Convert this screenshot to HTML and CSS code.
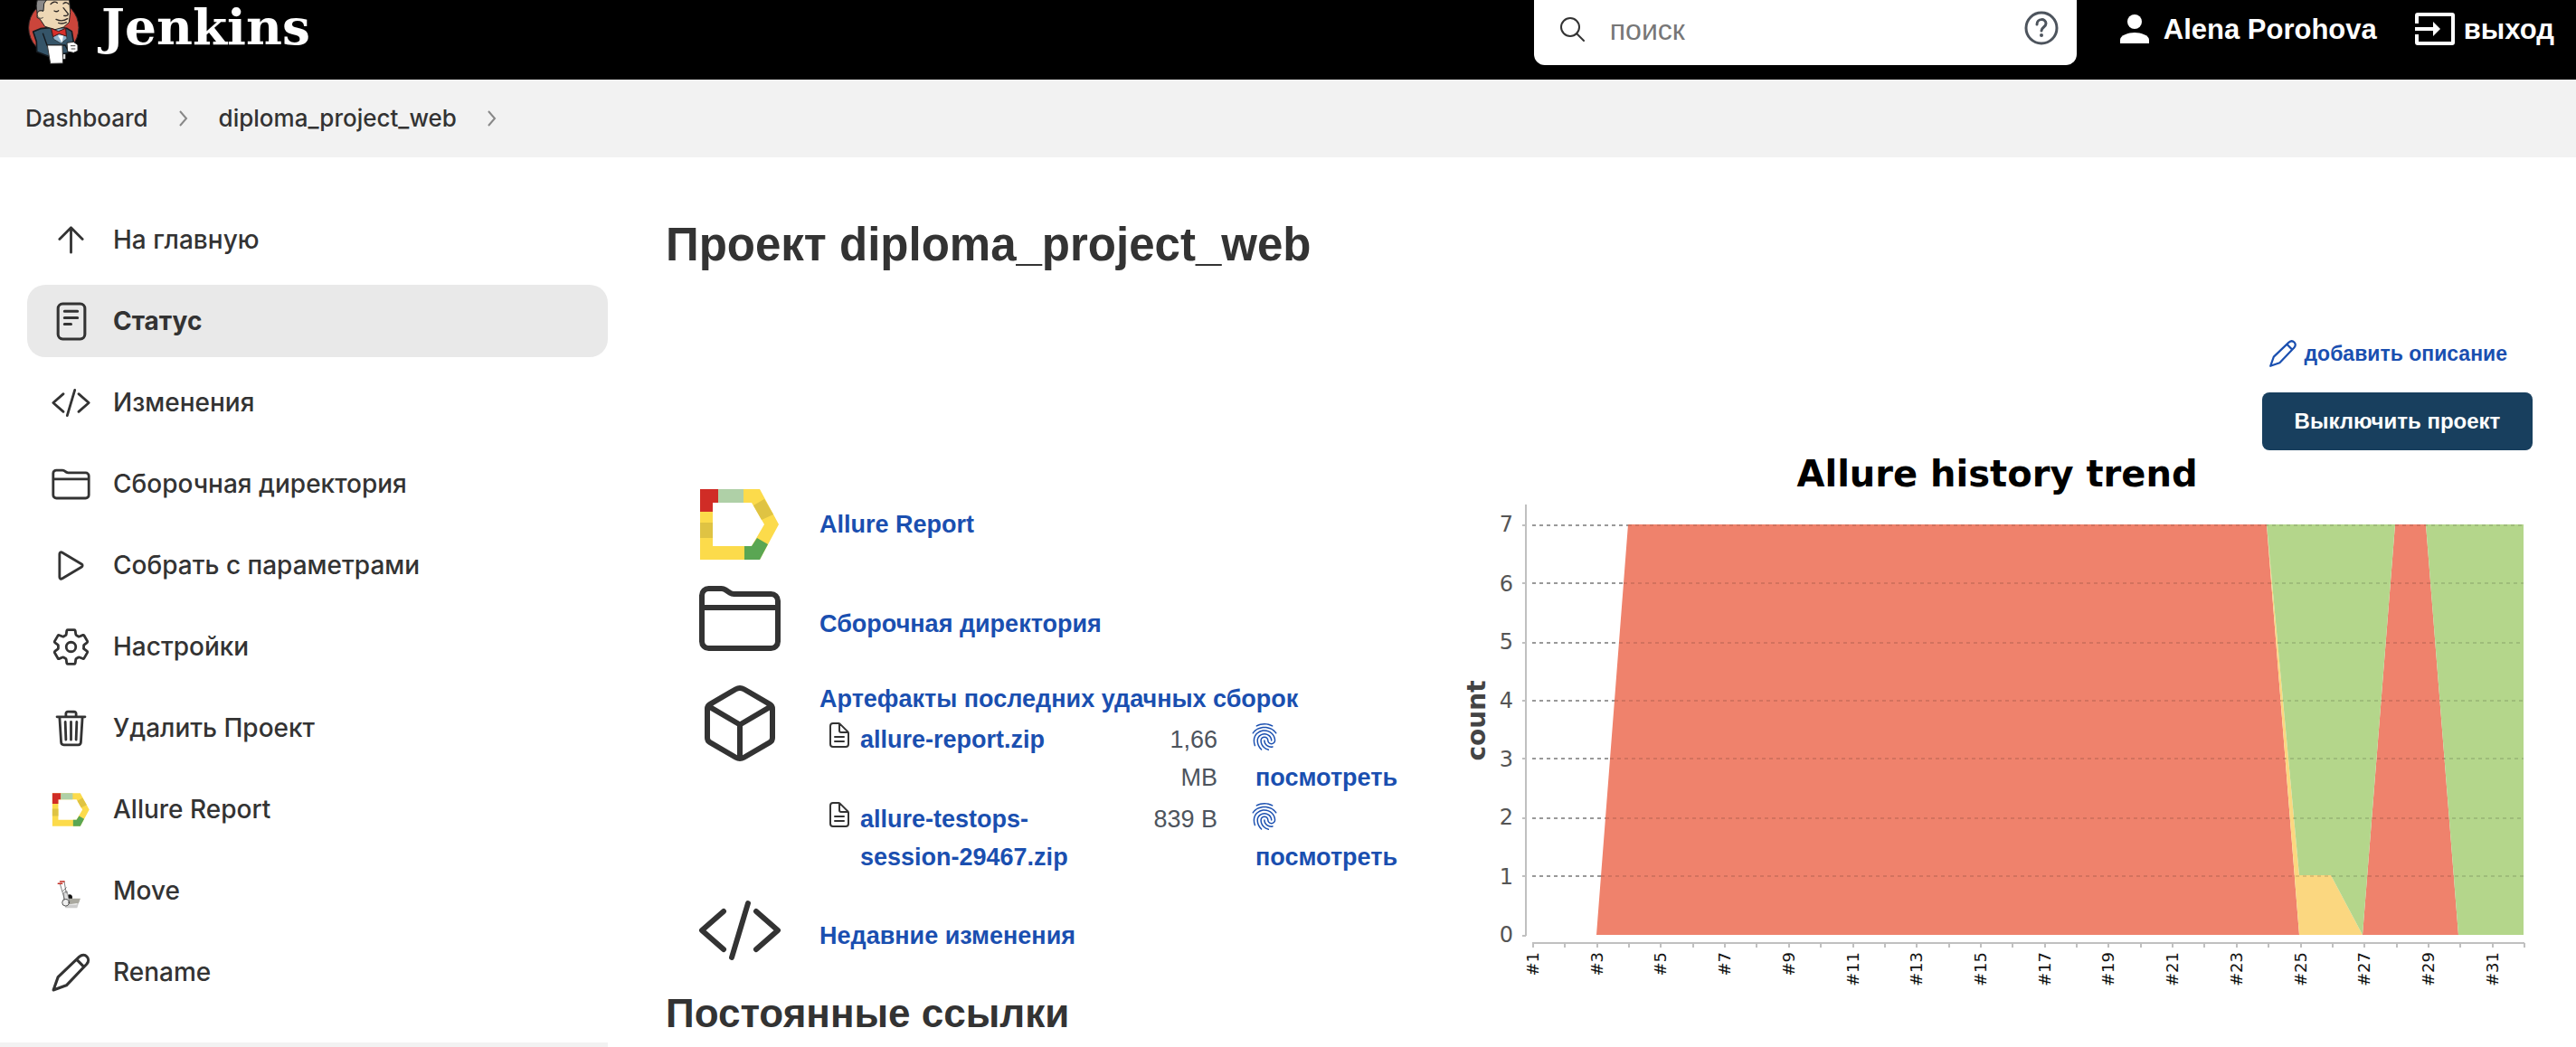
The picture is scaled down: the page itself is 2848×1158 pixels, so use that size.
FILE: index.html
```html
<!DOCTYPE html>
<html lang="ru">
<head>
<meta charset="utf-8">
<title>diploma_project_web [Jenkins]</title>
<link rel="stylesheet" href="styles.css">
</head>
<body>
<svg class="sprite" aria-hidden="true">
  <symbol id="i-chevron" viewBox="0 0 10 18"><path d="M1 1l7 8-7 8"/></symbol>
  <symbol id="i-up" viewBox="0 0 512 512"><path d="M112 244L256 100l144 144M256 120v292"/></symbol>
  <symbol id="i-status" viewBox="0 0 44 44"><rect x="8" y="3" width="29" height="38" rx="5"/><path d="M15 11h14M15 18h14M15 25h7"/></symbol>
  <symbol id="i-code" viewBox="0 0 512 512"><path d="M160 368L32 256l128-112M352 368l128-112-128-112M304 96l-96 320"/></symbol>
  <symbol id="i-folder" viewBox="0 0 512 512"><path d="M440 432H72a40 40 0 01-40-40V120a40 40 0 0140-40h75.890a40 40 0 0122.190 6.720l27.840 18.560a40 40 0 0022.190 6.720H440a40 40 0 0140 40v240a40 40 0 01-40 40zM32 192h448"/></symbol>
  <symbol id="i-play" viewBox="0 0 512 512"><path d="M112 111v290c0 17.440 17 28.520 31 20.160l247.900-148.370c12.120-7.250 12.120-26.330 0-33.580L143 90.840c-14-8.360-31 2.720-31 20.160z"/></symbol>
  <symbol id="i-gear" viewBox="0 0 512 512"><circle cx="256" cy="256" r="60"/><path d="M416.390 256a154.340 154.340 0 01-1.530 20.790l45.210 35.460a10.810 10.810 0 012.450 13.750l-42.770 74a10.810 10.810 0 01-13.140 4.590l-44.900-18.080a16.110 16.110 0 00-15.170 1.750A164.480 164.480 0 01325 400.800a15.940 15.940 0 00-8.820 12.140l-6.730 47.890a11.080 11.080 0 01-10.680 9.170h-85.540a11.110 11.110 0 01-10.690-8.870l-6.720-47.820a16.070 16.070 0 00-9-12.220 155.300 155.300 0 01-21.460-12.570 16 16 0 00-15.110-1.710l-44.890 18.070a10.810 10.810 0 01-13.140-4.580l-42.770-74a10.800 10.800 0 012.450-13.750l38.210-30a16.050 16.050 0 006-14.080c-.36-4.170-.58-8.330-.58-12.500s.21-8.270.58-12.350a16 16 0 00-6.070-13.940l-38.190-30A10.810 10.810 0 0149.480 186l42.770-74a10.810 10.810 0 0113.140-4.590l44.900 18.080a16.110 16.110 0 0015.170-1.750A164.480 164.480 0 01187 111.200a15.940 15.940 0 008.820-12.140l6.730-47.890A11.080 11.080 0 01213.230 42h85.540a11.110 11.110 0 0110.690 8.870l6.720 47.820a16.070 16.070 0 009 12.220 155.300 155.300 0 0121.460 12.570 16 16 0 0015.110 1.710l44.890-18.070a10.810 10.810 0 0113.140 4.580l42.770 74a10.800 10.800 0 01-2.450 13.750l-38.210 30a16.050 16.050 0 00-6.050 14.080c.33 4.140.55 8.300.55 12.470z"/></symbol>
  <symbol id="i-trash" viewBox="0 0 512 512"><path d="M112 112l20 320c.95 18.490 14.400 32 32 32h184c17.670 0 30.870-13.510 32-32l20-320M80 112h352M192 112V72a23.930 23.930 0 0124-24h80a23.930 23.930 0 0124 24v40M256 176v224M184 176l8 224M328 176l-8 224"/></symbol>
  <symbol id="i-pencil" viewBox="0 0 44 44"><path d="M3 41l5-14L31 5c6-5 13 2 8 8L17 36zM28 8l8 8"/></symbol>
  <symbol id="i-cube" viewBox="0 0 512 512"><path d="M448 341.370V170.610A32 32 0 00432.110 143l-152-88.460a47.940 47.940 0 00-48.240 0L79.890 143A32 32 0 0064 170.610v170.760A32 32 0 0079.890 369l152 88.460a48 48 0 0048.240 0l152-88.460A32 32 0 00448 341.370zM69 154l187 110 187-110M256 464V264"/></symbol>
  <symbol id="i-doc" viewBox="0 0 512 512"><path d="M416 221.250V416a48 48 0 01-48 48H144a48 48 0 01-48-48V96a48 48 0 0148-48h98.750a32 32 0 0122.620 9.370l141.260 141.260a32 32 0 019.370 22.620zM256 56v120a32 32 0 0032 32h120M176 288h160M176 368h160"/></symbol>
  <symbol id="i-print" viewBox="0 0 24 24"><path d="M17.810 4.470c-.08 0-.16-.02-.23-.06C15.660 3.420 14 3 12.010 3c-1.980 0-3.860.47-5.570 1.410-.24.13-.54.04-.68-.2-.13-.24-.04-.55.2-.68C7.820 2.520 9.860 2 12.010 2c2.130 0 3.990.47 6.030 1.520.25.13.34.43.21.67-.09.18-.26.28-.44.28zM3.500 9.720c-.1 0-.2-.03-.29-.09-.23-.16-.28-.47-.12-.7.99-1.400 2.250-2.500 3.750-3.270C9.980 4.040 14 4.030 17.150 5.650c1.500.77 2.760 1.860 3.750 3.250.16.22.11.54-.12.7-.23.16-.54.11-.7-.12-.9-1.260-2.040-2.250-3.390-2.940-2.870-1.470-6.540-1.470-9.400.01-1.360.7-2.500 1.700-3.400 2.960-.08.14-.23.21-.39.21zm6.250 12.070c-.13 0-.26-.05-.35-.15-.87-.87-1.340-1.430-2.010-2.640-.69-1.230-1.050-2.730-1.050-4.340 0-2.970 2.540-5.390 5.660-5.390s5.660 2.420 5.660 5.390c0 .28-.22.5-.5.5s-.5-.22-.5-.5c0-2.420-2.090-4.390-4.660-4.390-2.570 0-4.660 1.970-4.660 4.390 0 1.440.32 2.770.93 3.850.64 1.150 1.080 1.640 1.850 2.420.19.2.19.51 0 .71-.11.1-.24.15-.37.15zm7.170-1.850c-1.190 0-2.240-.3-3.100-.89-1.490-1.010-2.380-2.650-2.380-4.390 0-.28.22-.5.5-.5s.5.22.5.5c0 1.410.72 2.740 1.940 3.560.71.48 1.540.71 2.540.71.24 0 .64-.03 1.040-.1.27-.05.53.13.58.41.05.27-.13.53-.41.58-.57.11-1.070.12-1.210.12zM14.910 22c-.04 0-.09-.01-.13-.02-1.590-.44-2.630-1.030-3.720-2.100-1.400-1.390-2.170-3.240-2.170-5.220 0-1.620 1.380-2.940 3.080-2.940 1.700 0 3.080 1.320 3.080 2.940 0 1.070.93 1.940 2.080 1.940s2.080-.87 2.080-1.940c0-3.770-3.250-6.830-7.250-6.830-2.840 0-5.440 1.580-6.610 4.030-.39.81-.59 1.760-.59 2.800 0 .78.07 2.010.67 3.610.1.26-.03.55-.29.64-.26.1-.55-.04-.64-.29-.49-1.310-.73-2.610-.73-3.960 0-1.200.23-2.290.68-3.240 1.330-2.790 4.280-4.600 7.510-4.600 4.550 0 8.250 3.510 8.250 7.830 0 1.620-1.380 2.940-3.080 2.940s-3.080-1.320-3.080-2.940c0-1.070-.93-1.940-2.080-1.940s-2.080.87-2.080 1.940c0 1.710.66 3.310 1.870 4.510.95.94 1.860 1.460 3.270 1.850.27.07.42.35.35.61-.05.23-.26.38-.47.38z"/></symbol>
  <symbol id="i-allure" viewBox="0 0 96 96"><path fill="#fcdb4b" d="M4 9h66l21 39-21 39H4zM18 24v48h43l14-24-14-24z" fill-rule="evenodd"/><path fill="#d02c26" d="M4 9h20v15h-6v10H4z"/><path fill="#afd0a7" d="M24 9h28v15H24z"/><path fill="#dfc343" d="M75 20L63 27l9 16 13-6zM4 46h14v17H4z"/><path fill="#5aa653" d="M53 87V72h8l6-9 12 7-9 17z"/></symbol>
  <symbol id="i-move" viewBox="0 0 60 60"><path d="M20 50h18l5-7-4 12H22z" fill="#ccc"/><ellipse cx="28" cy="40" rx="4" ry="5" fill="#111"/><path d="M24 41l20 0-3 7-17 2z" fill="#aaa9a0"/><path d="M20 32l4-2 4 17-8-3z" fill="#ddd" stroke="#777" stroke-width="1"/><path d="M14 20l7 24M20 16l3 17M18 30l5-5" fill="none" stroke="#555" stroke-width="1"/><path d="M11 19h6M14 16h6" stroke="#c22b22" stroke-width="2"/><circle cx="22" cy="47" r="5" fill="#eee" stroke="#222" stroke-width="1"/></symbol>
</svg>

<header class="header">
  <a class="brand" href="#">
    <svg class="butler" viewBox="0 0 240 216" aria-hidden="true">
      <ellipse cx="118" cy="92" rx="83" ry="88" fill="#cb453b" stroke="#302525" stroke-width="3"/>
      <path d="M50 105l24-10 36-4 52 3 16 10 6 36-20 36-60 12-42-16-1-34z" fill="#355468" stroke="#14191e" stroke-width="5" stroke-linejoin="round"/>
      <path d="M108 94l22-2 26 2 6 34-20 16-24-14z" fill="#8fb3cc" stroke="#222" stroke-width="2"/>
      <path d="M132 118h18l-4 24z" fill="#fff"/>
      <path d="M66 0h104l3 40-4 34-18 16-28 8-34-10-16-24-10-6z" fill="#eed7b5" stroke="#222" stroke-width="3"/>
      <path d="M64 0h30l-8 12-2 24c-10-4-20 2-20 8-5-20-4-32 0-44z" fill="#8a8989" stroke="#222" stroke-width="3"/>
      <path d="M84 38c-12-6-22 0-20 12 1 10 10 14 19 8" fill="#eed7b5" stroke="#333" stroke-width="3"/>
      <path d="M108 14c6-8 16-10 22-4M150 12c8-6 14-4 18 2M120 36q8 5 14-1M150 26l16 20q0 8-14 6M126 64q20 10 38-2M134 76q14 5 26-2" fill="none" stroke="#2f2927" stroke-width="4" stroke-linecap="round"/>
      <path d="M110 94l24 10 24-10 2 26-24-8-20 10z" fill="#d82f2b" stroke="#401717" stroke-width="3"/>
      <path d="M82 110l14 40h60l12 22" fill="none" stroke="#14191e" stroke-width="4"/>
      <path d="M97 150h50l2 60-42 1z" fill="#fff" stroke="#333" stroke-width="3"/>
      <path d="M150 180h7v16h-8z" fill="#ddd"/>
      <path d="M162 142l22-3 14 10v20l-14 6-20-4z" fill="#fff" stroke="#222" stroke-width="3"/>
      <path d="M174 152h16M176 162h14" stroke="#444" stroke-width="3"/>
    </svg>
    <span>Jenkins</span>
  </a>
  <form class="search" role="search">
    <svg class="search-icon" viewBox="0 0 28 28" aria-hidden="true"><circle cx="12" cy="12" r="10"/><path d="M19 19l8 8"/></svg>
    <input type="search" placeholder="поиск" aria-label="поиск">
    <a class="help" href="#" aria-label="Справка"><svg viewBox="0 0 38 38" aria-hidden="true"><circle cx="19" cy="19" r="17"/><path d="M14 15c0-7 10-7 10-1 0 4-5 4-5 8"/><circle class="dot" cx="19" cy="27" r="2"/></svg></a>
  </form>
  <nav class="account">
    <a href="#"><svg class="user-icon" viewBox="0 0 32 32" aria-hidden="true"><circle cx="16" cy="8" r="8"/><path d="M0 32v-4c0-5 9-8 16-8s16 3 16 8v4z"/></svg>Alena Porohova</a>
    <a href="#"><svg class="exit-icon" viewBox="0 0 44 36" aria-hidden="true"><path d="M0 12V3a3 3 0 013-3h38a3 3 0 013 3v30a3 3 0 01-3 3H3a3 3 0 01-3-3v-9h4v8h36V4H4v8zM0 16h20v-6l8 8-8 8v-6H0z"/></svg>выход</a>
  </nav>
</header>

<nav class="crumbs" aria-label="Навигация">
  <a href="#">Dashboard</a><svg aria-hidden="true"><use href="#i-chevron"/></svg>
  <a href="#">diploma_project_web</a><svg aria-hidden="true"><use href="#i-chevron"/></svg>
</nav>

<div class="page">
  <aside class="side">
    <nav class="tasks">
      <a href="#"><svg class="icon"><use href="#i-up"/></svg>На главную</a>
      <a href="#" class="active" aria-current="page"><svg class="icon thin"><use href="#i-status"/></svg>Статус</a>
      <a href="#"><svg class="icon"><use href="#i-code"/></svg>Изменения</a>
      <a href="#"><svg class="icon"><use href="#i-folder"/></svg>Сборочная директория</a>
      <a href="#"><svg class="icon"><use href="#i-play"/></svg>Собрать с параметрами</a>
      <a href="#"><svg class="icon"><use href="#i-gear"/></svg>Настройки</a>
      <a href="#"><svg class="icon"><use href="#i-trash"/></svg>Удалить Проект</a>
      <a href="#"><svg class="icon art"><use href="#i-allure"/></svg>Allure Report</a>
      <a href="#"><svg class="icon art"><use href="#i-move"/></svg>Move</a>
      <a href="#"><svg class="icon thin"><use href="#i-pencil"/></svg>Rename</a>
    </nav>
    <section class="history" aria-label="История сборок"></section>
  </aside>

  <main class="main">
    <h1>Проект diploma_project_web</h1>
    <div class="columns">
      <div class="overview">
        <div class="entry"><svg class="icon large art"><use href="#i-allure"/></svg><a href="#">Allure Report</a></div>
        <div class="entry lowered"><svg class="icon large"><use href="#i-folder"/></svg><a href="#">Сборочная директория</a></div>
        <div class="entry artifacts"><svg class="icon large"><use href="#i-cube"/></svg>
          <div>
            <a href="#">Артефакты последних удачных сборок</a>
            <table>
              <tr>
                <td class="type"><svg class="icon small"><use href="#i-doc"/></svg></td>
                <td class="file"><a href="#">allure-report.zip</a></td>
                <td class="size">1,66 MB</td>
                <td class="view"><a href="#" aria-label="Отпечаток"><svg class="print"><use href="#i-print"/></svg></a><a href="#">посмотреть</a></td>
              </tr>
              <tr>
                <td class="type"><svg class="icon small"><use href="#i-doc"/></svg></td>
                <td class="file"><a href="#">allure-testops-session-29467.zip</a></td>
                <td class="size">839 B</td>
                <td class="view"><a href="#" aria-label="Отпечаток"><svg class="print"><use href="#i-print"/></svg></a><a href="#">посмотреть</a></td>
              </tr>
            </table>
          </div>
        </div>
        <div class="entry lowered"><svg class="icon large"><use href="#i-code"/></svg><a href="#">Недавние изменения</a></div>
        <h2>Постоянные ссылки</h2>
      </div>

      <div class="trend">
        <a class="describe" href="#"><svg class="icon edit"><use href="#i-pencil"/></svg>добавить описание</a>
        <button type="button">Выключить проект</button>
        <svg class="chart" viewBox="0 0 1200 612" role="img" aria-label="Allure history trend">
          <text class="chart-title" x="608" y="40" text-anchor="middle">Allure history trend</text>
          <path class="grid" d="M94 83H1190M94 147H1190M94 213H1190M94 277H1190M94 341H1190M94 407H1190M94 471H1190"/>
          <path fill="#ef826c" d="M165 536l35-454h706l36 454zM1012 536l36-454h34l36 454z"/>
          <path fill="#fbd780" d="M906 82l36 388h35l35 66h-70z"/>
          <path fill="#b4d68b" d="M906 82h142l-36 454-35-66h-35zM1082 82h108v454h-72z"/>
          <path class="grid over" d="M200 83H1190M195 147H1190M190 213H1190M185 277H1190M180 341H1190M175 407H1190M170 471H1190"/>
          <path class="axis" d="M87 60V537M83 537h4M83 83h4M83 147h4M83 213h4M83 277h4M83 341h4M83 407h4M83 471h4"/>
          <path class="axis" d="M94 545H1191"/>
          <g id="ticks" class="axis"></g>
          <g class="y-labels" text-anchor="end">
            <text x="73" y="90">7</text><text x="73" y="156">6</text><text x="73" y="220">5</text><text x="73" y="285">4</text><text x="73" y="350">3</text><text x="73" y="414">2</text><text x="73" y="480">1</text><text x="73" y="544">0</text>
          </g>
          <g id="builds" class="x-labels" text-anchor="end"></g>
          <text class="y-title" transform="translate(42 299) rotate(-90)" text-anchor="middle">count</text>
        </svg>
      </div>
    </div>
  </main>
</div>
<script src="chart.js"></script>
</body>
</html>
```
FILE: chart.js
```js
// Places the build ticks and every second build number along the x axis.
const NS = 'http://www.w3.org/2000/svg';
const ticks = document.getElementById('ticks');
const builds = document.getElementById('builds');
for (let n = 1; n <= 32; n++) {
  const x = Math.round(95 + (n - 1) * 1096 / 31);
  const tick = document.createElementNS(NS, 'path');
  tick.setAttribute('d', `M${x} 545v5`);
  ticks.append(tick);
  if (n % 2) {
    const label = document.createElementNS(NS, 'text');
    label.setAttribute('transform', `translate(${x + 6} 555) rotate(-90)`);
    label.textContent = '#' + n;
    builds.append(label);
  }
}
```
FILE: styles.css
```css
* { box-sizing: border-box; }
body {
  margin: 0;
  background: #fff;
  color: #333;
  font: 28px/42px "Liberation Sans", Arial, sans-serif;
}
a { color: #1a4fb0; text-decoration: none; font-weight: bold; }
svg { display: block; flex: none; }
.sprite { position: absolute; width: 0; height: 0; }

.header {
  display: flex;
  align-items: flex-start;
  height: 88px;
  padding: 0 24px 0 20px;
  background: #000;
}
.header a { color: #fff; }
.brand { display: flex; gap: 12px; margin-right: auto; font: bold 55px/60px "DejaVu Serif", Georgia, serif; }
.butler { width: 80px; height: 72px; }
.search {
  display: flex;
  gap: 24px;
  width: 600px;
  height: 72px;
  margin-right: 48px;
  padding: 12px 20px 0 28px;
  background: #fff;
  border-radius: 0 0 12px 12px;
}
.search svg { fill: none; stroke: #4d545d; stroke-width: 3; stroke-linecap: round; }
.search .search-icon { width: 28px; height: 28px; margin-top: 6px; stroke: #333; stroke-width: 2; }
.search input {
  flex: 1;
  min-width: 0;
  height: 42px;
  padding: 0 4px;
  border: 0;
  background: none;
  color: #333;
  font: 32px/42px "Liberation Sans", Arial, sans-serif;
}
.search input::placeholder { color: #777; opacity: 1; }
.help svg { width: 38px; height: 38px; }
.search .dot { fill: #4d545d; stroke: none; }
.account { display: flex; gap: 42px; padding-top: 12px; font-size: 31px; }
.account a { display: flex; }
.account svg { fill: #fff; }
.user-icon { width: 32px; height: 32px; margin: 4px 16px 0 0; }
.exit-icon { width: 44px; height: 36px; margin: 2px 10px 0 0; }

.crumbs { display: flex; align-items: center; height: 86px; padding: 0 28px; gap: 34px; background: #f2f2f2; }
.crumbs a, .tasks a { color: #333; font: 500 26px/42px Inter, "Liberation Sans", sans-serif; }
.crumbs svg { width: 10px; height: 18px; fill: none; stroke: #888; stroke-width: 2; }

.page { display: flex; align-items: stretch; }
.side { flex: 0 0 672px; }
.tasks { display: flex; flex-direction: column; gap: 10px; padding: 51px 0 38px 30px; }
.tasks a { display: flex; align-items: center; gap: 24px; height: 80px; padding: 0 26px; border-radius: 20px; font-size: 28px; }
.tasks .active { background: #e9e9e9; font-weight: 700; }
.history { border-top: 5px solid #f2f2f2; }

.icon { width: 45px; height: 45px; fill: none; stroke: #333; stroke-width: 32; stroke-linecap: round; stroke-linejoin: round; }
.icon.thin { stroke-width: 3; }
.icon.large { width: 96px; height: 96px; }
.icon.small { width: 32px; height: 32px; }
.icon.edit { width: 32px; height: 32px; stroke: #1a4fb0; stroke-width: 3; }
.icon.art { stroke: none; }

.main { flex: 1; min-width: 0; padding: 67px 48px 0 64px; }
h1, h2 { margin: 0; font-weight: bold; }
h1 { margin-bottom: 74px; font-size: 51px; line-height: 60px; }
h2 { padding-top: 10px; font-size: 44px; line-height: 52px; }
.columns { display: flex; gap: 40px; }
.overview { display: flex; flex-direction: column; gap: 8px; flex: 0 0 824px; padding-top: 157px; font-size: 27px; }
.entry { display: flex; align-items: center; gap: 40px; padding-left: 34px; }
.lowered > a { padding-top: 12px; }
.artifacts { align-items: flex-start; padding-top: 12px; }
table { width: 648px; margin-top: 3px; border-collapse: collapse; table-layout: fixed; }
td { padding: 0 0 4px; vertical-align: top; }
.type { width: 45px; padding-left: 6px; }
.file { width: 285px; padding-right: 40px; }
.size { width: 110px; padding-left: 20px; color: #4d545d; text-align: right; }
.view { padding-left: 34px; }
.view a { display: block; padding-left: 8px; }
.view a:first-child { height: 42px; padding: 0; }
.print { width: 36px; height: 36px; fill: #1a4fb0; }

.trend { display: flex; flex-direction: column; align-items: flex-end; flex: 1; min-width: 0; }
.describe { display: flex; gap: 8px; padding-right: 28px; font-size: 23px; line-height: 32px; }
button {
  width: 299px;
  height: 64px;
  margin-top: 27px;
  border: 0;
  border-radius: 8px;
  background: #183f5e;
  color: #fff;
  font: bold 24px/32px "Liberation Sans", Arial, sans-serif;
}
.chart { width: 100%; height: auto; font-family: "DejaVu Sans", sans-serif; }
.chart-title { font-size: 40px; font-weight: bold; fill: #000; }
.grid { fill: none; stroke: #999; stroke-width: 2; stroke-dasharray: 4 4; }
.over { stroke: #000; stroke-opacity: .12; }
.axis { fill: none; stroke: #c0c0c0; stroke-width: 2; }
.y-labels { font-size: 24px; fill: #555; }
.x-labels { font-size: 18px; fill: #111; }
.y-title { font-size: 28px; font-weight: bold; fill: #444; }
```
